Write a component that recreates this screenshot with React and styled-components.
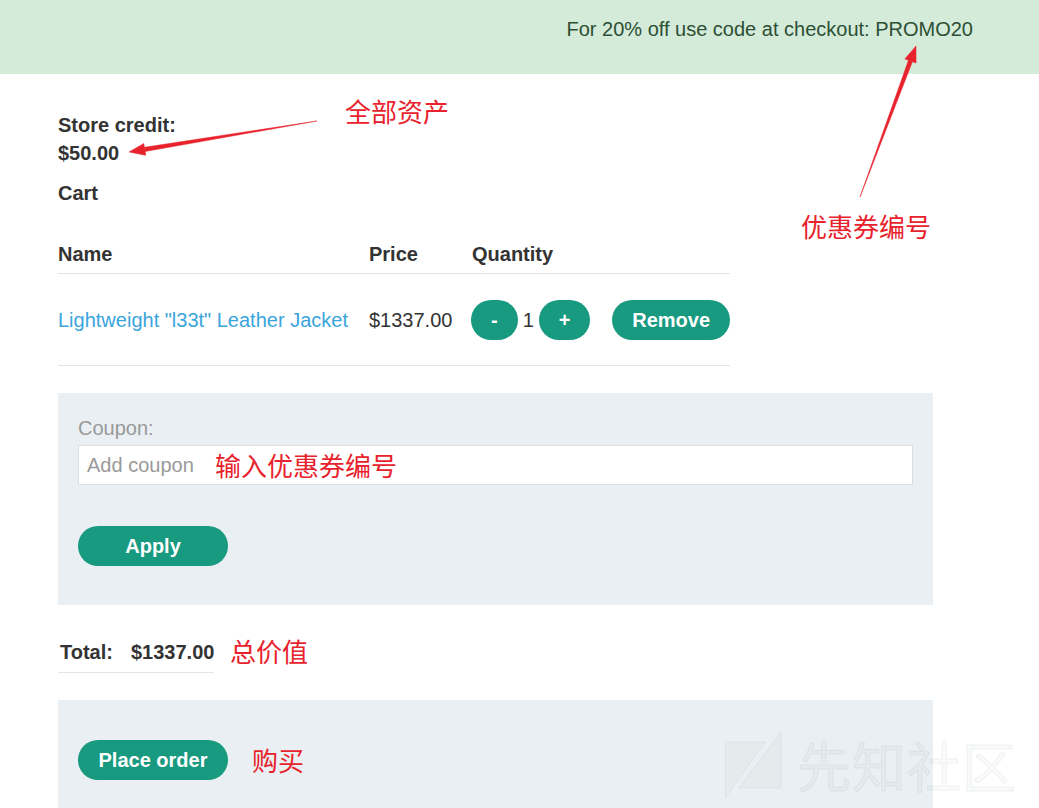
import React from "react";
import styled, { createGlobalStyle } from "styled-components";

const color = {
  text: "#333333",
  banner: "#d4ebda",
  bannerText: "#2d4f33",
  green: "#189a80",
  link: "#3aa5dd",
  panel: "#e9eff2",
  line: "#e4e4e4",
  muted: "#999999",
  red: "#e8222c",
};

const GlobalStyle = createGlobalStyle`
  body {
    margin: 0;
    background: #fff;
    color: ${color.text};
    font-family: "Liberation Sans", Arial, sans-serif;
    font-size: 20px;
    line-height: 28px;
  }
`;

const Page = styled.div`
  position: relative;
  width: 1039px;
  height: 808px;
  overflow: hidden;
`;

const Banner = styled.div`
  height: 74px;
  box-sizing: border-box;
  padding: 15px 66px 0 0;
  background: ${color.banner};
  color: ${color.bannerText};
  text-align: right;
`;

const Main = styled.div`
  padding: 37px 0 0 58px;
  width: 875px;
`;

const Strong = styled.div`
  font-weight: 700;
  margin-top: ${(p) => p.$top || 0}px;
`;

const CartTable = styled.div`
  width: 672px;
  margin-top: 28px;
  display: grid;
  grid-template-columns: 311px 103px 129px 129px;
`;

const HeadCell = styled.div`
  font-weight: 700;
  padding: 5px 0;
  border-bottom: 1px solid ${color.line};
`;

const Cell = styled.div`
  height: 91px;
  display: flex;
  align-items: center;
  justify-content: ${(p) => (p.$end ? "flex-end" : "flex-start")};
  border-bottom: 1px solid ${color.line};
`;

const ItemLink = styled.a`
  color: ${color.link};
  text-decoration: none;
  white-space: nowrap;
`;

const Qty = styled.div`
  display: flex;
  align-items: center;
  gap: 5px;
  margin-left: -1px;
`;

const Button = styled.button`
  height: 40px;
  min-width: ${(p) => p.$min || 0}px;
  margin-top: ${(p) => p.$top || 0}px;
  padding: 0 20px;
  border: none;
  border-radius: 20px;
  background: ${color.green};
  color: #fff;
  font-family: inherit;
  font-size: 20px;
  font-weight: 700;
  line-height: 40px;
  cursor: pointer;
`;

const Panel = styled.div`
  margin-top: ${(p) => p.$top}px;
  background: ${color.panel};
  padding: ${(p) => p.$pad};
  display: flex;
  flex-direction: ${(p) => (p.$row ? "row" : "column")};
  align-items: flex-start;
`;

const Label = styled.label`
  color: ${color.muted};
`;

const CouponInput = styled.input`
  margin-top: 3px;
  width: 100%;
  height: 40px;
  box-sizing: border-box;
  border: 1px solid #dcdfe1;
  background: #fff;
  padding: 0 8px;
  font-family: inherit;
  font-size: 20px;
  color: ${color.text};
  outline: none;

  &::placeholder {
    color: ${color.muted};
  }
`;

const TotalRow = styled.div`
  margin-top: 33px;
  display: inline-flex;
  gap: 18px;
  padding: 0 0 6px 2px;
  font-weight: 700;
  border-bottom: 1px solid ${color.line};
`;

const Note = styled.span`
  position: absolute;
  left: ${(p) => p.$x}px;
  top: ${(p) => p.$y}px;
  color: ${color.red};
  font-family: "Noto Sans CJK SC", sans-serif;
  font-size: 26px;
  line-height: 30px;
  white-space: nowrap;
  pointer-events: none;
`;

const Arrows = styled.svg`
  position: absolute;
  left: 0;
  top: 0;
  pointer-events: none;
`;

const Watermark = styled.div`
  position: absolute;
  left: 725px;
  top: 732px;
  display: flex;
  align-items: center;
  gap: 14px;
  pointer-events: none;
`;

const WatermarkText = styled.span`
  font-family: "Noto Sans CJK SC", sans-serif;
  font-size: 54px;
  line-height: 66px;
  letter-spacing: 1px;
  color: rgba(160, 170, 175, 0.06);
  -webkit-text-stroke: 1px rgba(150, 160, 165, 0.12);
`;

const Arrow = ({ x1, y1, x2, y2 }) => {
  const a = Math.atan2(y2 - y1, x2 - x1);
  const len = 16;
  const w = 6;
  const bx = x2 - len * Math.cos(a);
  const by = y2 - len * Math.sin(a);
  const px = -Math.sin(a) * w;
  const py = Math.cos(a) * w;
  return (
    <g fill={color.red} stroke={color.red}>
      <polygon
        points={`${x1},${y1} ${bx + px * 0.35},${by + py * 0.35} ${bx - px * 0.35},${by - py * 0.35}`}
        strokeWidth="0.5"
      />
      <polygon
        points={`${x2},${y2} ${bx + px},${by + py} ${bx - px},${by - py}`}
        strokeWidth="0.5"
      />
    </g>
  );
};

export default function App() {
  return (
    <Page>
      <GlobalStyle />
      <Banner>For 20% off use code at checkout: PROMO20</Banner>
      <Main>
        <Strong>Store credit:</Strong>
        <Strong>$50.00</Strong>
        <Strong $top={12}>Cart</Strong>
        <CartTable>
          <HeadCell>Name</HeadCell>
          <HeadCell>Price</HeadCell>
          <HeadCell>Quantity</HeadCell>
          <HeadCell />
          <Cell>
            <ItemLink href="#">Lightweight "l33t" Leather Jacket</ItemLink>
          </Cell>
          <Cell>$1337.00</Cell>
          <Cell>
            <Qty>
              <Button>-</Button>
              <span>1</span>
              <Button>+</Button>
            </Qty>
          </Cell>
          <Cell $end>
            <Button>Remove</Button>
          </Cell>
        </CartTable>
        <Panel $top={27} $pad="21px 20px 39px">
          <Label>Coupon:</Label>
          <CouponInput placeholder="Add coupon" />
          <Button $min={150} $top={41}>
            Apply
          </Button>
        </Panel>
        <TotalRow>
          <span>Total:</span>
          <span>$1337.00</span>
        </TotalRow>
        <Panel $top={27} $pad="40px 20px 60px" $row>
          <Button $min={150}>Place order</Button>
        </Panel>
      </Main>

      <Watermark>
        <svg width="58" height="66" viewBox="0 0 58 66">
          <polygon points="0,10 40,10 0,66" fill="rgba(150,160,165,0.05)" stroke="rgba(150,160,165,0.12)" />
          <polygon points="56,0 56,56 14,56" fill="rgba(150,160,165,0.05)" stroke="rgba(150,160,165,0.12)" />
        </svg>
        <WatermarkText>先知社区</WatermarkText>
      </Watermark>

      <Arrows width="1039" height="808">
        <Arrow x1={317} y1={121} x2={129} y2={152} />
        <Arrow x1={860} y1={197} x2={916} y2={46} />
      </Arrows>

      <Note $x={345} $y={96}>全部资产</Note>
      <Note $x={801} $y={211}>优惠券编号</Note>
      <Note $x={215} $y={450}>输入优惠券编号</Note>
      <Note $x={230} $y={636}>总价值</Note>
      <Note $x={252} $y={745}>购买</Note>
    </Page>
  );
}
